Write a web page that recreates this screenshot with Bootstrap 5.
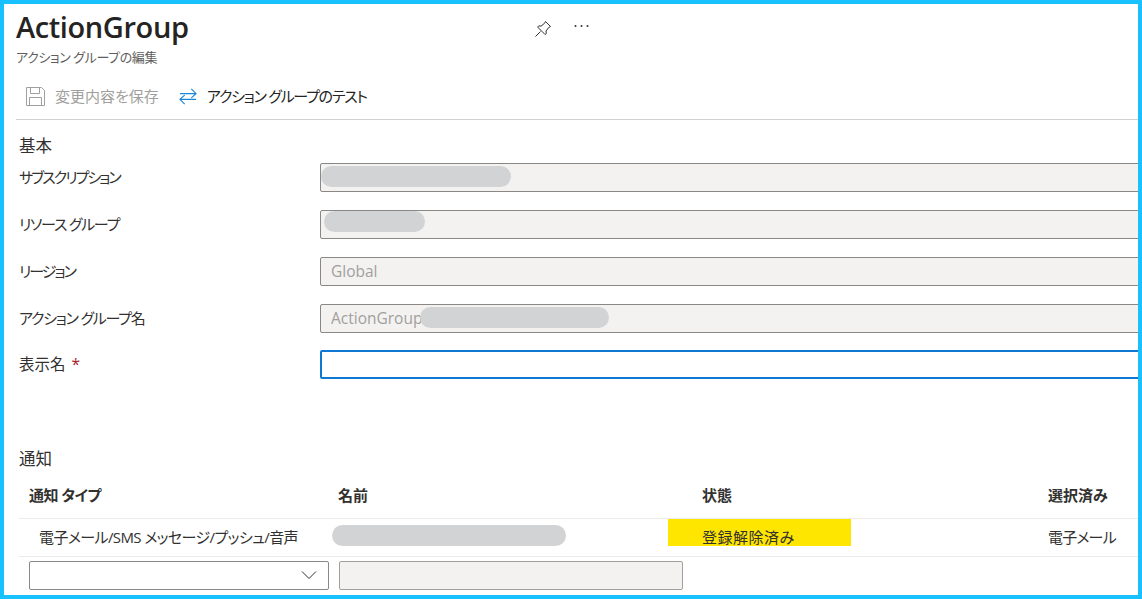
<!DOCTYPE html>
<html lang="ja">
<head>
  <meta charset="UTF-8">
  <title>ActionGroup</title>
  <link href="https://cdn.jsdelivr.net/npm/bootstrap@5.3.0/dist/css/bootstrap.min.css" rel="stylesheet">
  <style>
    html, body { height: 100%; overflow: hidden; }
    body {
      font-family: "Open Sans", "Noto Sans CJK JP", sans-serif;
      font-size: 15px;
      font-feature-settings: "palt";
      color: #323130;
      background: #fff;
    }
    .shot-frame {
      height: 599px;
      border: 4px solid #1ac1ff;
      overflow: hidden;
      padding-left: 12px;
    }
    .page-title { font-size: 29px; font-weight: 600; line-height: 36px; color: #252423; letter-spacing: -.4px; margin: 5px 0 0; }
    .page-sub { font-size: 13px; line-height: 16px; color: #605e5c; margin-top: 4px; letter-spacing: -.4px; }
    .head-icons { position: absolute; left: 518px; top: 11px; gap: 22px; }
    .head-block { position: relative; height: 62px; }
    .cmd-bar { height: 46px; border-bottom: 1px solid #d2d0ce; margin-top: 3px; padding-left: 10px; }
    .cmd-item { font-size: 15px; color: #252423; }
    .cmd-item.off { color: #a19f9d; }
    .kana-tight { letter-spacing: -1.25px; }
    .kana-tighter { letter-spacing: -2px; }
    .sec-label { font-size: 16.5px; line-height: 20px; padding-left: 3px; color: #323130; }
    .field-row { height: 29px; margin-bottom: 18px; }
    .field-row.tight { margin-bottom: 17px; }
    .field-name { width: 304px; flex: none; padding-left: 3px; color: #323130; }
    .field-box { position: relative; flex: 1; margin-right: -4px; }
    .field-box .form-control {
      height: 29px; min-height: 0; padding: 0 10px 1px; font-size: 15.5px; border-radius: 2px;
      border: 1px solid #8a8886; background: #f3f2f1; color: #a19f9d; opacity: 1;
    }
    .field-box .form-control.live { background: #fff; border: 2px solid #0f78d4; box-shadow: none; }
    .disp-name { font-size: 15.5px; }
    .req { color: #a4262c; margin-left: 2px; }
    .blur-blob { position: absolute; height: 21px; border-radius: 11px; background: #d2d3d5; }
    .notify-table { table-layout: fixed; width: 1119px; margin: 0 0 0 3px; }
    .notify-table th, .notify-table td { border-bottom: 1px solid #edebe9; padding: 0 0 0 10px; font-size: 15px; color: #323130; vertical-align: middle; }
    .notify-table th { height: 45px; font-weight: 600; }
    .notify-table td { height: 38px; }
    .notify-table .state-col { padding-left: 34px; }
    .notify-table td.state-cell { padding: 0; vertical-align: top; position: relative; }
    .notify-table td.first-cell { padding-left: 20px; letter-spacing: -.6px; }
    .state-flag { width: 183px; height: 27px; background: #ffe600; padding: 5px 0 0 34px; line-height: 26px; overflow: visible; letter-spacing: .5px; }
    .name-cell { position: relative; }
    .add-row { padding: 4px 0 0 13px; gap: 10px; }
    .add-row .form-select {
      width: 300px; height: 29px; min-height: 0; padding: 0 30px 0 8px; border: 1px solid #8a8886; border-radius: 2px;
      background-size: 16px 10px; background-position: right 11px center;
      background-image: url("data:image/svg+xml,%3csvg xmlns='http://www.w3.org/2000/svg' viewBox='0 0 16 10'%3e%3cpath fill='none' stroke='%23323130' d='M1 1.5l7 7 7-7'/%3e%3c/svg%3e");
    }
    .add-row .form-control { width: 344px; height: 29px; min-height: 0; border: 1px solid #a19f9d; border-radius: 2px; background: #f3f2f1; opacity: 1; }
  </style>
</head>
<body>
  <div class="shot-frame">
    <div class="head-block">
      <h1 class="page-title">ActionGroup</h1>
      <div class="page-sub">アクション グループの編集</div>
      <div class="head-icons d-flex align-items-center">
        <svg width="18" height="18" viewBox="0 0 18 18" fill="none" stroke="#323130" stroke-width="1"><path d="M1.5 16.5L6.5 11.5M11.5 1.5L16.5 6.5L14.8 7.4L12 11L12.3 13.5L11 14.5L3.6 7L4.8 5.8L7 6.2L10.6 3.2Z" /></svg>
        <svg width="15" height="4" viewBox="0 0 15 4" fill="#323130" style="margin-top:-6px"><circle cx="1.5" cy="2" r="1"/><circle cx="7.5" cy="2" r="1"/><circle cx="13.5" cy="2" r="1"/></svg>
      </div>
    </div>
    <div class="cmd-bar d-flex align-items-center">
      <div class="cmd-item off d-flex align-items-center">
        <svg style="margin-right:10px" width="19" height="19" viewBox="0 0 19 19" fill="none" stroke="#a19f9d"><path d="M.5.5H15.5L18.5 3.5V18.5H.5Z"/><path d="M4.5.5V6.5H13.5V.5M3.5 18.5V10.5H15.5V18.5"/></svg>
        <span>変更内容を保存</span>
      </div>
      <div class="cmd-item d-flex align-items-center" style="margin-left:20px">
        <svg style="margin-right:10px" width="18" height="19" viewBox="0 0 19 19" fill="none" stroke="#1a86d9" stroke-width="1.2"><path d="M1 6.5H17.5M13 1.5L18 6.5L13 11M18 12.5H1.5M6 8L1 12.5L6 17.5"/></svg>
        <span class="kana-tight">アクション グループのテスト</span>
      </div>
    </div>
    <div class="sec-label" style="margin-top:16px;margin-bottom:7px">基本</div>
    <div class="field-row d-flex align-items-center">
      <div class="field-name kana-tighter">サブスクリプション</div>
      <div class="field-box"><input class="form-control" disabled><span class="blur-blob" style="left:1px;top:3px;width:190px"></span></div>
    </div>
    <div class="field-row d-flex align-items-center">
      <div class="field-name kana-tight">リソース グループ</div>
      <div class="field-box"><input class="form-control" disabled><span class="blur-blob" style="left:4px;top:1px;width:101px"></span></div>
    </div>
    <div class="field-row d-flex align-items-center">
      <div class="field-name kana-tighter">リージョン</div>
      <div class="field-box"><input class="form-control" disabled value="Global"></div>
    </div>
    <div class="field-row tight d-flex align-items-center">
      <div class="field-name kana-tight">アクション グループ名</div>
      <div class="field-box"><input class="form-control" disabled value="ActionGroup"><span class="blur-blob" style="left:100px;top:3px;width:189px"></span></div>
    </div>
    <div class="field-row d-flex align-items-center">
      <div class="field-name disp-name">表示名 <span class="req">*</span></div>
      <div class="field-box"><input class="form-control live"></div>
    </div>
    <div class="sec-label" style="margin-top:70px">通知</div>
    <table class="table notify-table mb-0" style="margin-top:4px">
      <colgroup><col style="width:309px"><col style="width:340px"><col style="width:370px"><col style="width:100px"></colgroup>
      <thead>
        <tr><th style="letter-spacing:-.5px">通知 タイプ</th><th>名前</th><th class="state-col">状態</th><th>選択済み</th></tr>
      </thead>
      <tbody>
        <tr>
          <td class="first-cell">電子メール/SMS メッセージ/プッシュ/音声</td>
          <td class="name-cell"><span class="blur-blob" style="left:4px;top:6px;width:234px"></span></td>
          <td class="state-cell"><div class="state-flag">登録解除済み</div></td>
          <td style="letter-spacing:-.8px">電子メール</td>
        </tr>
      </tbody>
    </table>
    <div class="add-row d-flex">
      <select class="form-select" aria-label="通知 タイプ"></select>
      <input class="form-control" disabled>
    </div>
  </div>
  <script src="https://cdn.jsdelivr.net/npm/bootstrap@5.3.0/dist/js/bootstrap.bundle.min.js"></script>
</body>
</html>
